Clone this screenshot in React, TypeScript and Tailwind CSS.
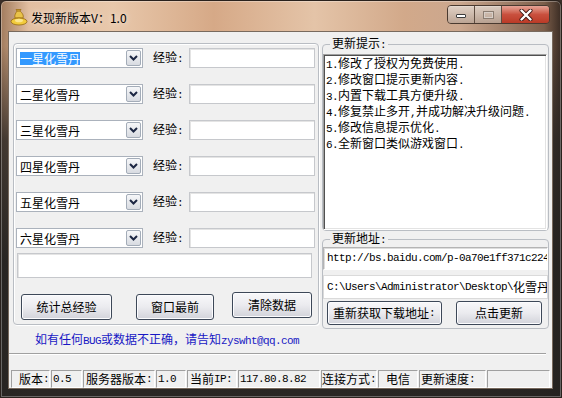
import React from "react";

// SimSun-like mix: ASCII runs get a narrow mono face, CJK stays 12px
const isAscii = /^[\x20-\x7e]+$/;

function Txt({ s }: { s: string }) {
  const parts = s.split(/([\x20-\x7e]+)/).filter(Boolean);
  return (
    <>
      {parts.map((p, i) =>
        isAscii.test(p) ? (
          <span
            key={i}
            className="font-['Liberation_Mono',monospace] text-[11px] tracking-[-0.6px]"
          >
            {p}
          </span>
        ) : (
          <span key={i}>{p}</span>
        ),
      )}
    </>
  );
}

function Combo({ label, selected }: { label: string; selected?: boolean }) {
  return (
    <div className="flex h-[20px] w-[127px] shrink-0 items-center border border-[#abb2bc] bg-white pr-[1px] pl-[3px]">
      <span
        className={
          selected
            ? "bg-[#3399ff] leading-[13px] text-white"
            : "leading-[13px] text-black"
        }
      >
        {label}
      </span>
      <div className="ml-auto flex h-[16px] w-[15px] items-center justify-center rounded-[2px] border border-[#a3acb8] bg-gradient-to-b from-[#f6f7f9] to-[#d8dbe1]">
        <svg width="9" height="6" viewBox="0 0 9 6">
          <path d="M1 1 L4.5 4.5 L8 1" fill="none" stroke="#1c2743" strokeWidth="2" />
        </svg>
      </div>
    </div>
  );
}

function Input({ className }: { className: string }) {
  return (
    <div
      className={
        "shrink-0 border border-[#c6c8cc] bg-white shadow-[inset_1px_1px_0_#e4e4e4] " + className
      }
    />
  );
}

function Btn({ children, className }: { children: React.ReactNode; className: string }) {
  return (
    <div
      className={
        "flex shrink-0 items-center justify-center rounded-[3px] border border-[#3d4858] bg-gradient-to-b from-[#f8f8fa] via-[#ebebef] to-[#d2d3da] leading-[14px] whitespace-nowrap text-black shadow-[inset_0_0_0_1px_#fcfcfe] " +
        className
      }
    >
      {children}
    </div>
  );
}

function Panel({ children, className }: { children?: React.ReactNode; className: string }) {
  return (
    <div
      className={
        "flex h-[18px] shrink-0 items-center overflow-hidden border border-t-[#a0a0a0] border-r-white border-b-white border-l-[#a0a0a0] leading-[14px] whitespace-pre " +
        className
      }
    >
      {children}
    </div>
  );
}

const rows = ["一星化雪丹", "二星化雪丹", "三星化雪丹", "四星化雪丹", "五星化雪丹", "六星化雪丹"];

const notes = [
  "1.修改了授权为免费使用.",
  "2.修改窗口提示更新内容.",
  "3.内置下载工具方便升级.",
  "4.修复禁止多开,并成功解决升级问题.",
  "5.修改信息提示优化.",
  "6.全新窗口类似游戏窗口.",
];

export default function App() {
  return (
    <div className="h-[398px] w-[562px] overflow-hidden bg-[#3a2e28] font-['Noto_Sans_CJK_SC','Noto_Sans',sans-serif] text-[12px] text-black">
      <div className="flex h-full w-full flex-col rounded-t-[6px] border border-[#2a221d] bg-[linear-gradient(180deg,rgba(40,37,35,0)_0px,rgba(40,37,35,0)_45px,rgba(40,37,35,0.8)_140px,rgba(36,34,32,0.97)_260px),linear-gradient(90deg,#a27c5e_0%,#e2bfa1_5%,#e8c8ab_20%,#d6a987_38%,#e4c4a8_56%,#d2a98a_72%,#cba78e_82%,#7c5e4a_97%,#3a2c24_100%)] shadow-[inset_0_0_0_1px_rgba(255,255,255,0.3)]">
        {/* Title bar */}
        <div className="flex h-[30px] shrink-0 items-start">
          <svg className="mt-[7px] ml-[9px]" width="18" height="18" viewBox="0 0 18 18">
            <path d="M5 10 C4 7 6 5 7 3 L6 1.5 L11 1.5 L10 3 C12 5 14 7 13 10 Z" fill="#e9c34a" stroke="#9c6d12" strokeWidth="0.8" />
            <path d="M7 3 L10 3" stroke="#9c6d12" strokeWidth="1" />
            <ellipse cx="9" cy="13.5" rx="8" ry="3.5" fill="#f2cb3c" stroke="#94680f" strokeWidth="0.8" />
            <ellipse cx="9" cy="12.5" rx="4" ry="1.8" fill="#fbe58f" />
          </svg>
          <span className="mt-[9px] ml-[3px] leading-[16px] [text-shadow:0_0_6px_rgba(255,255,255,0.9)]">
            发现新版本V：1.0
          </span>
          <div className="mt-[4px] mr-[11px] ml-auto flex h-[19px] overflow-hidden rounded-[4px] border border-[#4a3a30] shadow-[inset_0_1px_0_rgba(255,255,255,0.5)]">
            <div className="flex w-[27px] items-end justify-center border-r border-[#5e4c40] bg-gradient-to-b from-[#e6dcd4]/80 to-[#b9a597]/80 pb-[5px]">
              <div className="h-[4px] w-[10px] rounded-[1px] border border-[#3c3c3c] bg-white" />
            </div>
            <div className="flex w-[27px] items-center justify-center border-r border-[#5e4c40] bg-gradient-to-b from-[#e6dcd4]/80 to-[#b9a597]/80">
              <div className="h-[8px] w-[11px] border border-[#8b7d72] shadow-[inset_0_0_0_1px_#d8cfc8]" />
            </div>
            <div className="flex w-[47px] items-center justify-center bg-gradient-to-b from-[#e5a497] via-[#c9503e] to-[#bb3a26]">
              <svg width="14" height="12" viewBox="0 0 14 12">
                <path d="M2.5 1.5 L11.5 10.5 M11.5 1.5 L2.5 10.5" stroke="#3b1510" strokeWidth="4" strokeLinecap="round" />
                <path d="M2.5 1.5 L11.5 10.5 M11.5 1.5 L2.5 10.5" stroke="#ffffff" strokeWidth="2.4" strokeLinecap="round" />
              </svg>
            </div>
          </div>
        </div>

        {/* Client area */}
        <div className="mr-[8px] mb-[9px] ml-[7px] flex flex-1 flex-col border border-[#786a5e] bg-[#f0f0f0]">
          <div className="flex items-start">
            {/* Left group */}
            <div className="mt-[11px] ml-[4px] flex h-[282px] w-[306px] flex-col rounded-[4px] border border-[#b9bdc3] pt-[4px] pl-[2px] shadow-[inset_1px_1px_0_#ffffff,1px_1px_0_#ffffff]">
              <div className="flex flex-col gap-[16px]">
                {rows.map((r, i) => (
                  <div key={r} className="flex h-[20px] items-center">
                    <Combo label={r} selected={i === 0} />
                    <span className="ml-[10px] w-[30px] shrink-0 leading-[14px] whitespace-nowrap">
                      <Txt s="经验:" />
                    </span>
                    <Input className="ml-[6px] h-[20px] w-[126px]" />
                  </div>
                ))}
              </div>
              <Input className="mt-[5px] ml-[1px] h-[25px] w-[295px]" />
              <div className="flex items-start">
                <Btn className="mt-[16px] ml-[5px] h-[26px] w-[91px]">统计总经验</Btn>
                <Btn className="mt-[16px] ml-[24px] h-[26px] w-[78px]">窗口最前</Btn>
                <Btn className="mt-[14px] ml-[18px] h-[26px] w-[80px]">清除数据</Btn>
              </div>
            </div>

            {/* Right column */}
            <div className="mt-[4px] ml-[3px] flex w-[227px] flex-col">
              <fieldset className="flex h-[195px] flex-col rounded-[4px] border border-[#b9bdc3] pb-[1px]">
                <legend className="ml-[7px] px-[2px] leading-[14px]">
                  <Txt s="更新提示:" />
                </legend>
                <div className="mt-[2px] h-[176px] w-[224px] border border-t-[#a0a0a0] border-r-white border-b-white border-l-[#a0a0a0] bg-white pt-[1px] pl-[2px] leading-[13px] whitespace-pre shadow-[inset_1px_1px_0_#505050,inset_-1px_-1px_0_#e3e3e3]">
                  {notes.map((n) => (
                    <div key={n}>
                      <Txt s={n} />
                    </div>
                  ))}
                </div>
              </fieldset>
              <fieldset className="flex flex-col rounded-[4px] border border-[#b9bdc3] pb-[3px]">
                <legend className="ml-[7px] px-[2px] leading-[14px]">
                  <Txt s="更新地址:" />
                </legend>
                <div className="flex h-[23px] w-[225px] items-center overflow-hidden border border-t-[#b4b4b4] border-r-white border-b-white border-l-[#b4b4b4] bg-white pl-[3px] whitespace-pre shadow-[inset_1px_1px_0_#dcdcdc]">
                  <Txt s="http://bs.baidu.com/p-0a70e1ff371c224" />
                </div>
                <div className="mt-[5px] flex h-[24px] w-[225px] items-center overflow-hidden border border-[#dadada] bg-white pl-[3px] whitespace-pre">
                  <Txt s="C:\Users\Administrator\Desktop\化雪丹" />
                </div>
                <div className="mt-[2px] flex items-start">
                  <Btn className="ml-[4px] h-[24px] w-[115px] justify-start pl-[5px]">
                    <Txt s="重新获取下载地址:" />
                  </Btn>
                  <Btn className="ml-[14px] h-[24px] w-[86px]">点击更新</Btn>
                </div>
              </fieldset>
            </div>
          </div>

          <div className="mt-[4px] ml-[26px] leading-[12px] text-[#1818c4]">
            <Txt s="如有任何BUG或数据不正确，请告知zyswht@qq.com" />
          </div>

          <div className="mt-[6px] mr-[6px] border-t border-b border-t-[#a0a0a0] border-b-white" />

          <div className="mt-[15px] ml-[2px] flex gap-[1px]">
            <Panel className="w-[39px] pl-[7px]">
              <Txt s="版本:" />
            </Panel>
            <Panel className="w-[31px] pl-[1px]">
              <Txt s="0.5" />
            </Panel>
            <Panel className="w-[72px] pl-[2px]">
              <Txt s="服务器版本:" />
            </Panel>
            <Panel className="w-[30px] pl-[1px]">
              <Txt s="1.0" />
            </Panel>
            <Panel className="w-[50px] pl-[2px]">
              <Txt s="当前IP:" />
            </Panel>
            <Panel className="w-[82px] pl-[1px]">
              <Txt s="117.80.8.82" />
            </Panel>
            <Panel className="w-[56px] pl-0">
              <Txt s="连接方式:" />
            </Panel>
            <Panel className="w-[40px] justify-center">电信</Panel>
            <Panel className="w-[67px] pl-[1px]">
              <Txt s="更新速度:" />
            </Panel>
            <Panel className="w-[63px]" />
          </div>
        </div>
      </div>
    </div>
  );
}
